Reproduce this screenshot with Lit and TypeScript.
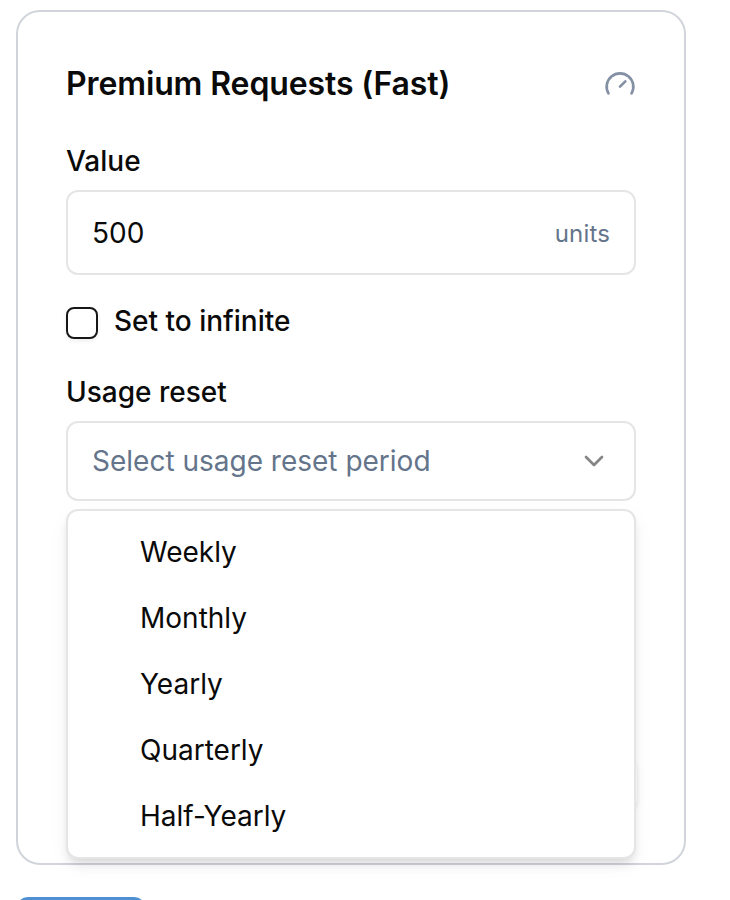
import { LitElement, html, css } from "lit";
import { customElement } from "lit/decorators.js";

@customElement("app-root")
export class AppRoot extends LitElement {
  static styles = css`
    :host { display: block; position: relative; height: 900px; overflow: hidden; background: #fff; font-family: Inter, sans-serif; color: #0a0a0a; font-size: 28px; }
    * { box-sizing: border-box; }
    .card { margin: 10px 0 0 16px; width: 670px; height: 855px; border: 2px solid #d1d5db; border-radius: 24px; padding: 48px; }
    .head { display: flex; justify-content: space-between; align-items: center; height: 48px; }
    h2 { margin: 0; font-size: 32px; font-weight: 600; line-height: 48px; letter-spacing: -0.12px; }
    .label { font-weight: 500; line-height: 28px; height: 28px; }
    .value { margin-top: 39px; }
    .field { display: flex; align-items: center; justify-content: space-between; width: 570px; border: 2px solid #e5e5e5; border-radius: 12px; padding: 0 24px; }
    .input { height: 85px; margin-top: 15px; }
    .units { font-size: 24px; color: #64748b; letter-spacing: 0.15px; padding-top: 2px; }
    .check { display: flex; align-items: center; gap: 16px; margin-top: 32px; height: 32px; font-weight: 500; }
    .check-text { line-height: 28px; padding-bottom: 4px; }
    .box { width: 32px; height: 32px; border: 2px solid #171717; border-radius: 8px; box-shadow: 0 2px 4px #0001; }
    .reset { margin-top: 39px; }
    .select { height: 80px; margin-top: 15px; color: #64748b; position: relative; }
    .menu { position: absolute; left: -2px; top: 86px; width: 570px; height: 350px; background: #fff; border: 2px solid #e5e5e5; border-radius: 12px; padding: 8px 0; box-shadow: 0 8px 12px -2px #00000016, 0 4px 8px -4px #0000001a, 0 6px 24px #00000008; color: #0a0a0a; }
    .item { height: 66px; line-height: 66px; padding-left: 72px; }
    .covered { margin: 256px 0 0 471px; width: 100px; height: 54px; border-radius: 12px; box-shadow: 0 2px 4px #0000001a; }
    .button { margin: 32px 0 0 16px; width: 130px; height: 60px; border-radius: 12px; background: #4f8fd3; }
  `;
  render() {
    return html`
      <section class="card">
        <div class="head"><h2>Premium Requests (Fast)</h2>
          <svg width="32" height="32" viewBox="0 0 24 24" fill="none" stroke="#8490a3" stroke-width="2" stroke-linecap="round" stroke-linejoin="round"><path d="m12 14 4-4"/><path d="M3.34 19a10 10 0 1 1 17.32 0"/></svg>
        </div>
        <div class="label value">Value</div>
        <div class="field input"><span>500</span><span class="units">units</span></div>
        <div class="check"><span class="box"></span><span class="check-text">Set to infinite</span></div>
        <div class="label reset">Usage reset</div>
        <div class="field select"><span>Select usage reset period</span>
          <svg width="32" height="32" viewBox="0 0 24 24" fill="none" stroke="#858585" stroke-width="2" stroke-linecap="round" stroke-linejoin="round"><path d="m6 9 6 6 6-6"/></svg>
          <div class="menu">${["Weekly", "Monthly", "Yearly", "Quarterly", "Half-Yearly"].map((t) => html`<div class="item">${t}</div>`)}</div>
        </div>
        <div class="covered"></div>
      </section>
      <div class="button"></div>`;
  }
}
